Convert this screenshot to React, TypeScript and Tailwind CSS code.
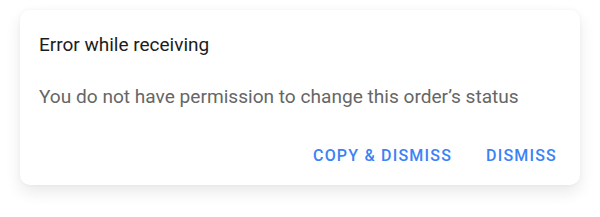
export default function App() {
  return (
    <div className="w-[600px] h-[217px] bg-white pt-[10px] pl-[20px]" style={{ fontFamily: 'Roboto, "Liberation Sans", sans-serif' }}>
      <div className="w-[560px] h-[175px] bg-white rounded-[10px] shadow-[0_7px_16px_rgba(0,0,0,0.09),0_0_5px_rgba(0,0,0,0.04)] flex flex-col pl-[19px] pr-[23px] pt-[23px]">
        <div className="text-[19px] leading-[24px] text-[#1c1c1c]">Error while receiving</div>
        <div className="mt-[28px] text-[19.1px] leading-[24px] text-[#666666]">You do not have permission to change this order’s status</div>
        <div className="mt-[37px] flex justify-end gap-[34px] text-[16px] leading-[20px] font-medium tracking-[0.075em] text-[#3b82f6]">
          <span>COPY &amp; DISMISS</span>
          <span>DISMISS</span>
        </div>
      </div>
    </div>
  );
}
